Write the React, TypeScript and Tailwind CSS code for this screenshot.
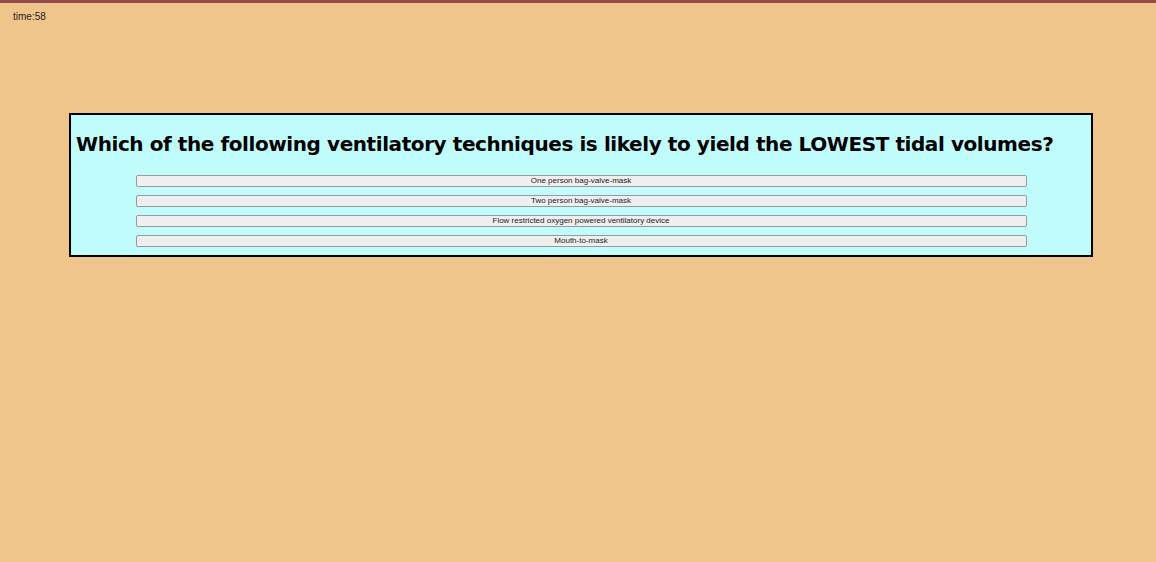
import React from "react";

const options = [
  "One person bag-valve-mask",
  "Two person bag-valve-mask",
  "Flow restricted oxygen powered ventilatory device",
  "Mouth-to-mask",
];

const App = () => {
  return (
    <div className="min-h-[562px] bg-[#f0c58c] border-t-[3px] border-[#944c4c]">
      {/* Timer */}
      <div className="pl-[13px] pt-[8px] text-[10px] leading-[12px] text-[#222] font-['Liberation_Sans',Arial,sans-serif]">
        time:58
      </div>

      {/* Question panel */}
      <div className="mt-[90px] ml-[69px] w-[1024px] border-2 border-black bg-[#c0fcfc] pb-[8px]">
        <h1 className="pl-[5px] pt-[17px] text-[20px] leading-[24px] tracking-[-0.42px] font-bold text-black font-['DejaVu_Sans',Verdana,sans-serif] whitespace-nowrap">
          Which of the following ventilatory techniques is likely to yield the LOWEST tidal volumes?
        </h1>
        <div className="mt-[19px] flex flex-col gap-[8px]">
          {options.map((o) => (
            <button
              key={o}
              className="mx-auto block w-[891px] h-[12px] rounded-[2px] border border-[#9a9a9a] bg-[#efefef] text-[8px] leading-[10px] text-[#222] font-['Liberation_Sans',Arial,sans-serif]"
            >
              {o}
            </button>
          ))}
        </div>
      </div>
    </div>
  );
};

export default App;
